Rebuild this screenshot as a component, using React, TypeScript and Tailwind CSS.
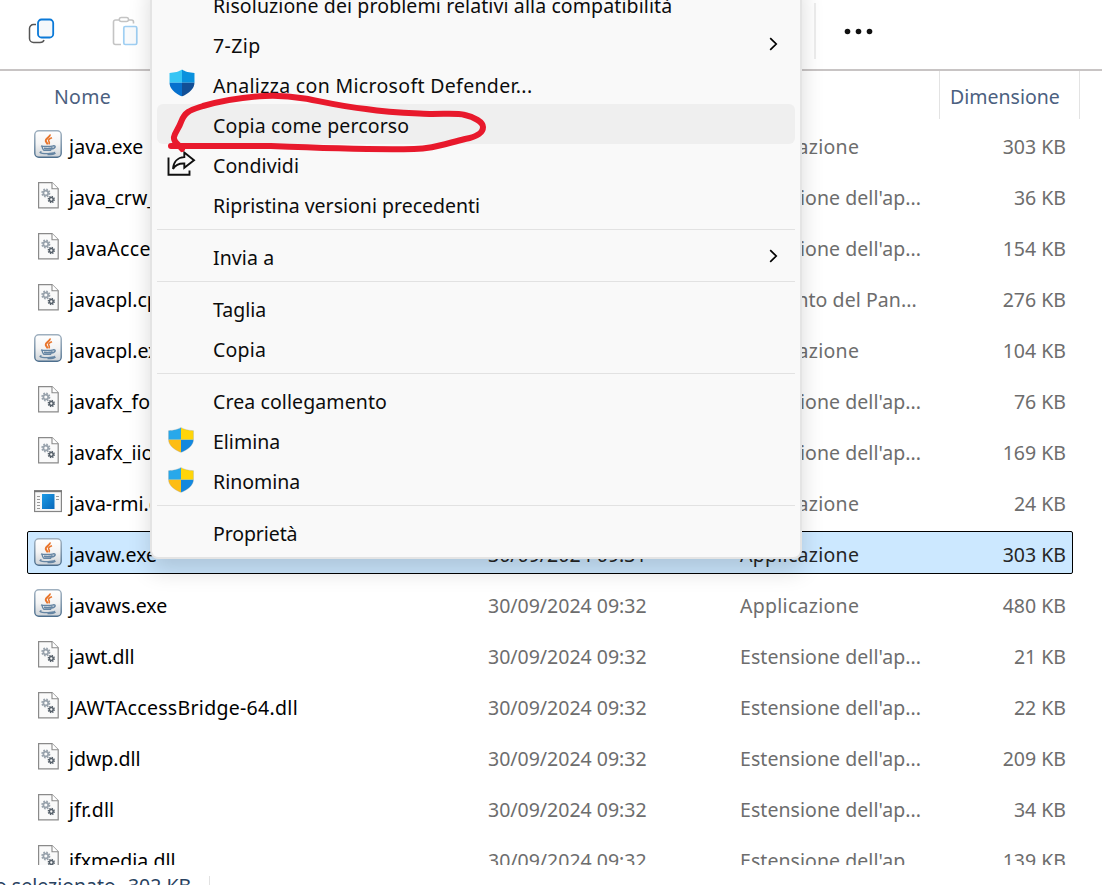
import React from "react";

type Kind = "java" | "dll" | "app";

interface FileRow {
  name: string;
  kind: Kind;
  date: string;
  type: string;
  size: string;
  selected?: boolean;
  track?: string;
}

const APP = "Applicazione";
const EXT = "Estensione dell'ap...";

const files: FileRow[] = [
  { name: "java.exe", kind: "java", date: "30/09/2024 09:31", type: APP, size: "303 KB", track: "tracking-[0.1px]" },
  { name: "java_crw_demo.dll", kind: "dll", date: "30/09/2024 09:31", type: EXT, size: "36 KB" },
  { name: "JavaAccessBridge-64.dll", kind: "dll", date: "30/09/2024 09:31", type: EXT, size: "154 KB", track: "tracking-[0.3px]" },
  { name: "javacpl.cpl", kind: "dll", date: "30/09/2024 09:31", type: "Elemento del Pan...", size: "276 KB" },
  { name: "javacpl.exe", kind: "java", date: "30/09/2024 09:31", type: APP, size: "104 KB" },
  { name: "javafx_font.dll", kind: "dll", date: "30/09/2024 09:31", type: EXT, size: "76 KB" },
  { name: "javafx_iio.dll", kind: "dll", date: "30/09/2024 09:31", type: EXT, size: "169 KB" },
  { name: "java-rmi.exe", kind: "app", date: "30/09/2024 09:31", type: APP, size: "24 KB" },
  { name: "javaw.exe", kind: "java", date: "30/09/2024 09:31", type: APP, size: "303 KB", selected: true },
  { name: "javaws.exe", kind: "java", date: "30/09/2024 09:32", type: APP, size: "480 KB" },
  { name: "jawt.dll", kind: "dll", date: "30/09/2024 09:32", type: EXT, size: "21 KB" },
  { name: "JAWTAccessBridge-64.dll", kind: "dll", date: "30/09/2024 09:32", type: EXT, size: "22 KB", track: "tracking-[0.3px]" },
  { name: "jdwp.dll", kind: "dll", date: "30/09/2024 09:32", type: EXT, size: "209 KB" },
  { name: "jfr.dll", kind: "dll", date: "30/09/2024 09:32", type: EXT, size: "34 KB", track: "tracking-[0.2px]" },
  { name: "jfxmedia.dll", kind: "dll", date: "30/09/2024 09:32", type: EXT, size: "139 KB" },
];

function JavaIcon() {
  return (
    <svg width="28" height="28" viewBox="0 0 28 28" fill="none">
      <defs>
        <linearGradient id="jb" x1="0" y1="0" x2="0" y2="1">
          <stop offset="0" stopColor="#fff" />
          <stop offset="0.5" stopColor="#f4f4f4" />
          <stop offset="1" stopColor="#cdd2d7" />
        </linearGradient>
        <linearGradient id="js" x1="0" y1="0" x2="0" y2="1">
          <stop offset="0" stopColor="#9fb0bf" />
          <stop offset="1" stopColor="#4d6f8e" />
        </linearGradient>
      </defs>
      <rect x="0.8" y="0.8" width="26.4" height="26.4" rx="4" fill="url(#jb)" stroke="url(#js)" strokeWidth="1.4" />
      <path d="M16 4.500c.6 2.600-4.800 4-4.300 6.300.3 1.500 1.800 2.400 1.800 3.700" stroke="#e8752c" strokeWidth="2" />
      <path d="M18 7.800c-2.300.8-3.800 1.800-3.300 3.200.4 1 1.300 1.600.2 3.200" stroke="#e8752c" strokeWidth="1.600" />
      <path d="M7 15.800c2 .9 10.500.9 12 0M8 16.300c.3 1.500.9 3.300 1.800 3.900h6.800c.8-.7 1.200-1.700 1.500-3M18.800 16c3-1 3.600 1.700-.8 3M10 18.200c2 .5 5 .5 7.300 0" stroke="#6585a3" strokeWidth="1.400" />
      <path d="M7.500 21.700c-5 1.500 4 2.200 8.500 1.700 3-.2 5-.9 4.500-1.500M21.500 23c-1 1.200-4.500 1.700-8 1.700" stroke="#6585a3" strokeWidth="1.300" />
    </svg>
  );
}

function DllIcon() {
  return (
    <svg width="21" height="27" viewBox="0 0 21 27" fill="none">
      <path d="M.6.600H14l6.200 6.200v19.100H.6z" fill="#fafafa" stroke="#8a8a8a" strokeWidth="1.200" />
      <path d="M14 .6v6.200h6.200" fill="#fff" stroke="#8a8a8a" strokeWidth="1.100" />
      <circle cx="7.800" cy="11" r="3.700" stroke="#98a2ac" strokeWidth="1.700" strokeDasharray="1.600 1.306" />
      <circle cx="7.800" cy="11" r="2.400" stroke="#98a2ac" strokeWidth="1.700" />
      <circle cx="13.300" cy="17.500" r="3" stroke="#56606a" strokeWidth="1.400" strokeDasharray="1.300 1.056" />
      <circle cx="13.300" cy="17.500" r="1.900" stroke="#56606a" strokeWidth="1.500" />
    </svg>
  );
}

function AppIcon() {
  return (
    <svg width="28" height="23" viewBox="0 0 28 23" fill="none">
      <defs>
        <linearGradient id="ab" x1="0" y1="0" x2="1" y2="1">
          <stop offset="0" stopColor="#1c9be6" />
          <stop offset="1" stopColor="#0767b9" />
        </linearGradient>
      </defs>
      <rect x="0.600" y="1" width="26.800" height="20.500" fill="#f8f8f8" stroke="#858585" strokeWidth="1.200" />
      <path d="M0 1.200h28" stroke="#777" strokeWidth="2" />
      <path d="M3 6.500h3M3 9.500h3M3 12.500h3M3 15.500h3M3 18.500h3M22 6.500h3M22 9.500h3" stroke="#999" />
      <rect x="8" y="4" width="12.500" height="15" fill="url(#ab)" />
    </svg>
  );
}

const SHIELD = "M12.500.5c2.500 1.800 7.500 3.200 12 3.200v9.100c0 6-5 10-12 13.200C5.500 22.800.5 18.800.5 12.800V3.700c4.500 0 9.500-1.400 12-3.200z";

function Shield({ defender }: { defender?: boolean }) {
  const id = defender ? "sd" : "su";
  const c = defender
    ? ["#36c5f4", "#0a91dd", "#0670cd", "#124f96"]
    : ["#28a8ea", "#ffd50a", "#fdbd14", "#1488df"];
  return (
    <svg width="26" height={defender ? 28 : 26} viewBox="0 0 25 26.500" preserveAspectRatio="none">
      <clipPath id={id}>
        <path d={SHIELD} />
      </clipPath>
      <g clipPath={`url(#${id})`}>
        <path fill={c[0]} d="M0 0h12.500v13H0z" />
        <path fill={c[1]} d="M12.500 0H25v13H12.500z" />
        <path fill={c[2]} d="M0 13h12.500v14H0z" />
        <path fill={c[3]} d="M12.500 13H25v14H12.500z" />
      </g>
      {!defender && <path d={SHIELD} fill="none" stroke="#90a0a0" strokeOpacity="0.4" strokeWidth="0.700" />}
    </svg>
  );
}

function ShareIcon() {
  return (
    <svg width="29" height="27" viewBox="0 0 29 27" fill="none" stroke="#111" strokeWidth="1.900">
      <path d="M1.500 7.500v17.300h21V20.500" />
      <path d="M17.300 2.600 27 10.200l-9.700 7.500v-4.200c-5.500-.3-9 1.700-11.300 5.400.4-6.800 4.500-11.500 11.300-11.800z" strokeLinejoin="miter" />
    </svg>
  );
}

interface Item {
  label: string;
  icon?: React.ReactNode;
  arrow?: boolean;
  hover?: boolean;
  track?: string;
}

const groups: Item[][] = [
  [
    { label: "Risoluzione dei problemi relativi alla compatibilità", track: "tracking-[0.11px]" },
    { label: "7-Zip", arrow: true, track: "tracking-[0.4px]" },
    { label: "Analizza con Microsoft Defender...", icon: <div className="ml-3 -mt-0.5"><Shield defender /></div>, track: "tracking-[0.33px]" },
    { label: "Copia come percorso", hover: true, track: "tracking-[0.14px]" },
    { label: "Condividi", icon: <div className="ml-2.5 -mt-0.5"><ShareIcon /></div>, track: "tracking-[0.1px]" },
    { label: "Ripristina versioni precedenti" },
  ],
  [{ label: "Invia a", arrow: true, track: "tracking-[0.1px]" }],
  [{ label: "Taglia" }, { label: "Copia", track: "tracking-[0.2px]" }],
  [
    { label: "Crea collegamento", track: "tracking-[0.1px]" },
    { label: "Elimina", icon: <div className="ml-[11px] -mt-px"><Shield /></div> },
    { label: "Rinomina", icon: <div className="ml-[11px] -mt-px"><Shield /></div> },
  ],
  [{ label: "Proprietà", track: "tracking-[-0.1px]" }],
];

function ContextMenu() {
  return (
    <div className="absolute -top-6 left-[150px] h-[583px] w-[652px] rounded-lg border-2 border-[#e4e4e4] bg-[#f9f9f9] px-[5px] pt-[6px] text-[#0c0c0c] shadow-[0_12px_22px_rgba(0,0,0,0.15)]">
      {groups.map((g, gi) => (
        <React.Fragment key={gi}>
          {gi > 0 && <div className="mt-[5px] mb-1.5 h-px bg-[#e2e2e2]" />}
          {g.map((it) => (
            <div key={it.label} className={`flex h-10 items-center rounded-md ${it.hover ? "bg-[#efefef]" : ""}`}>
              <div className="flex w-14 shrink-0">{it.icon}</div>
              <span className={`flex-1 pt-[3px] ${it.track ?? ""}`}>{it.label}</span>
              {it.arrow && (
                <svg className="-mt-px mr-[17px]" width="9" height="14" viewBox="0 0 9 14" fill="none">
                  <path d="m1.200 1.200 6 5.800-6 5.800" stroke="#000" strokeWidth="1.700" />
                </svg>
              )}
            </div>
          ))}
        </React.Fragment>
      ))}
    </div>
  );
}

function Toolbar() {
  return (
    <div className="flex h-[71px] items-start border-b-2 border-[#c8c4c4]">
      <svg className="mt-[18px] ml-7" width="27" height="27" viewBox="0 0 27 27" fill="none">
        <path d="M8 6.500H5.500a4 4 0 0 0-4 4v10a4 4 0 0 0 4 4h6.500c2 0 3.500-.7 4-2.500" stroke="#555" strokeWidth="1.500" />
        <rect x="10" y="1.500" width="15.200" height="18" rx="3.500" fill="#f5f8fb" stroke="#0a79d8" strokeWidth="1.800" />
      </svg>
      <svg className="mt-4 ml-[57px]" width="28" height="30" viewBox="0 0 28 30" fill="none">
        <path d="M7 4H3.500a2 2 0 0 0-2 2v20.500a2 2 0 0 0 2 2H9M17 4h2.500a2 2 0 0 1 2 2v1.500" stroke="#c4c4c4" strokeWidth="1.600" />
        <rect x="7.300" y="1.600" width="9.200" height="4" rx="2" stroke="#c4c4c4" strokeWidth="1.500" />
        <rect x="11.800" y="10.500" width="13" height="18" rx="1.500" fill="#f8fafc" stroke="#9fcff3" strokeWidth="1.700" />
      </svg>
      <div className="mt-[3px] ml-[674px] h-14 w-0.5 bg-[#ededed]" />
      <svg className="mt-7 ml-7" width="30" height="7" viewBox="0 0 30 7" fill="#111">
        <circle cx="3.500" cy="3.500" r="2.800" />
        <circle cx="14.500" cy="3.500" r="2.800" />
        <circle cx="25.500" cy="3.500" r="2.800" />
      </svg>
    </div>
  );
}

export default function App() {
  return (
    <div className="relative flex h-[885px] w-[1102px] flex-col overflow-hidden bg-white font-['Noto_Sans',sans-serif] text-[19.5px] leading-[26px] whitespace-nowrap">
      <Toolbar />
      <div className="flex h-12 shrink-0 items-center text-[#4b6080]">
        <div className="w-[939px] pt-1 pl-[54px] tracking-[0.3px]">Nome</div>
        <div className="h-full w-[141px] border-x border-[#e3e3e3] pt-[13px] pl-2.5">Dimensione</div>
      </div>
      <div className="h-[746px] shrink-0 overflow-hidden">
        {files.map((f) => (
          <div key={f.name} className="flex h-[51px] items-center pl-[27px]">
            <div
              className={`flex h-[43px] w-[1046px] items-center rounded-[2px] border ${
                f.selected ? "border-black bg-[#cce8ff] text-[#252525]" : "border-transparent text-[#6d6d6d]"
              }`}
            >
              <div className="ml-1.5 flex w-7 shrink-0 justify-center">
                {f.kind === "java" ? (
                  <div className="-mt-0.5"><JavaIcon /></div>
                ) : f.kind === "dll" ? (
                  <DllIcon />
                ) : (
                  <div><AppIcon /></div>
                )}
              </div>
              <div className={`w-[426px] pt-[5px] pl-[7px] text-black ${f.track ?? ""}`}>{f.name}</div>
              <div className="w-[252px] pt-[5px]">{f.date}</div>
              <div className={`w-[200px] pt-[5px] ${f.type === APP ? "tracking-[0.28px]" : "tracking-[0.06px]"}`}>{f.type}</div>
              <div className="flex-1 pt-[5px] pr-1.5 text-right">{f.size}</div>
            </div>
          </div>
        ))}
      </div>
      <div className="flex h-5 shrink-0 overflow-hidden text-[#29425f]">
        <div className="flex w-[209px] pt-2">
          <span className="-ml-[5px]">o selezionato</span>
          <span className="ml-3">302 KB</span>
        </div>
        <div className="mt-[11px] w-px bg-[#e2e2e2]" />
      </div>
      <ContextMenu />
      <svg className="absolute top-[86px] left-[159px]" width="335" height="72" viewBox="160 86 335 72" fill="none">
        <path
          d="M183 149c-2-4-9-6-8-12 1-5 5-9 7-15 4-11 10-12 22-16 22-6 42-9 62-10 20-1 30 1 43 3 20 4 37 8 58 10 25 4 45 4 66 5 16 0 25-1 33 1 9 2 18 7 18 12 0 6-7 10-18 12-24 6-35 10-51 10-50 1-97-1-145-3H172"
          stroke="#e8192c"
          strokeWidth="6"
          strokeLinecap="round"
          strokeLinejoin="round"
        />
      </svg>
    </div>
  );
}
